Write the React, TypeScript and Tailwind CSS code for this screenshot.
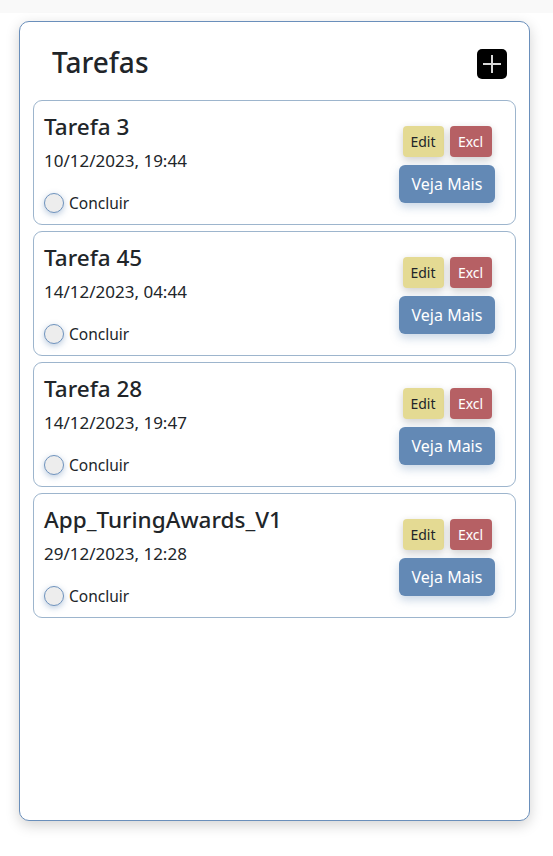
import React from "react";

const tasks = [
  { title: "Tarefa 3", date: "10/12/2023, 19:44" },
  { title: "Tarefa 45", date: "14/12/2023, 04:44" },
  { title: "Tarefa 28", date: "14/12/2023, 19:47" },
  { title: "App_TuringAwards_V1", date: "29/12/2023, 12:28" },
];

function Card({ title, date }: { title: string; date: string }) {
  return (
    <div className="flex h-[125px] items-stretch justify-between rounded-[9px] border border-[#9db5cd] pl-[10px] pr-[20px]">
      <div className="flex flex-col">
        <div className="mt-[11px] text-[22.5px] font-medium leading-[30px] text-[#212529]">{title}</div>
        <div className="mt-[7px] text-[17px] leading-[24px] text-[#212529]">{date}</div>
        <div className="mt-[20px] flex items-center gap-[5px]">
          <span className="h-[20px] w-[20px] rounded-full border border-[#6f93bd] bg-[#ededed] shadow-[0_2px_6px_rgba(99,137,181,0.45)]" />
          <span className="text-[15.5px] leading-[20px] text-[#212529]">Concluir</span>
        </div>
      </div>
      <div className="mt-[25px] flex flex-col items-center gap-[8px]">
        <div className="flex gap-[6px]">
          <button className="h-[31px] w-[41px] rounded-[4px] bg-[#e4da93] text-[14px] text-[#212529] shadow-[0_3px_8px_rgba(0,0,0,0.2)]">Edit</button>
          <button className="h-[31px] w-[42px] rounded-[4px] bg-[#b66064] text-[14px] text-white shadow-[0_3px_8px_rgba(0,0,0,0.2)]">Excl</button>
        </div>
        <button className="h-[38px] w-[96px] rounded-[6px] bg-[#6389b5] text-[16px] text-white shadow-[0_4px_10px_rgba(99,137,181,0.35)]">Veja Mais</button>
      </div>
    </div>
  );
}

export default function App() {
  return (
    <div className="min-h-[856px] bg-white" style={{ fontFamily: '"Noto Sans", "Open Sans", sans-serif' }}>
      <div className="h-[13px] bg-[#f9f9f9]" />
      <div className="px-[19px] pt-[8px]">
        <div className="flex h-[800px] w-[511px] flex-col rounded-[10px] border border-[#6a8fbb] bg-white px-[13px] shadow-[0_4px_14px_rgba(0,0,0,0.18)]">
          <div className="flex h-[78px] items-start justify-between pl-[19px] pr-[9px]">
            <h1 className="mt-[23px] text-[28px] font-medium leading-[34px] text-[#212529]">Tarefas</h1>
            <button className="mt-[27px] flex h-[30px] w-[30px] items-center justify-center rounded-[5px] bg-black">
              <svg width="22" height="22" viewBox="0 0 22 22">
                <path d="M11 2v18M2 11h18" stroke="#d8d8d8" strokeWidth="2" />
              </svg>
            </button>
          </div>
          <div className="flex flex-col gap-[6px]">
            {tasks.map((t) => (
              <Card key={t.title} {...t} />
            ))}
          </div>
        </div>
      </div>
    </div>
  );
}
